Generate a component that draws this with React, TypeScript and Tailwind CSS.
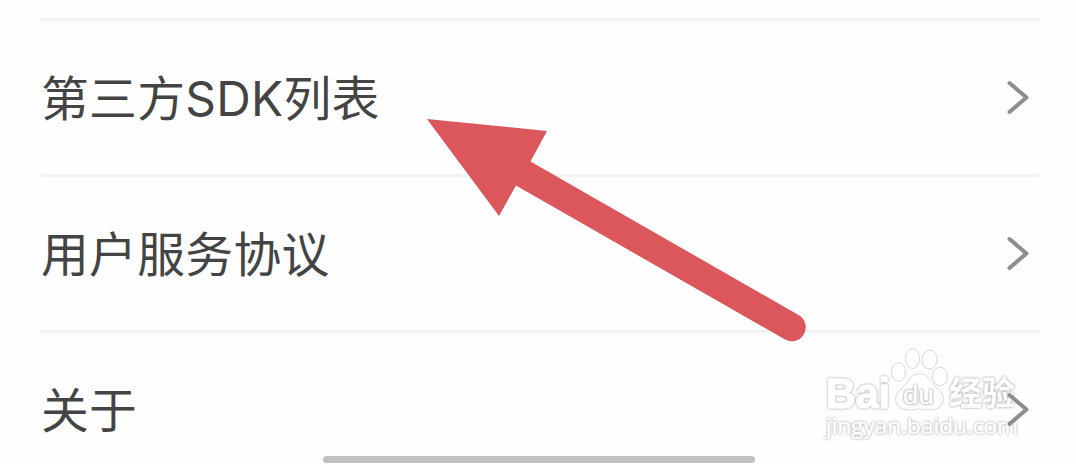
const items = ['第三方SDK列表', '用户服务协议', '关于'];

function Chevron() {
  return (
    <svg className="w-6 h-9 shrink-0" viewBox="0 0 24 36" fill="none">
      <path
        d="M2.5 3L19.5 17.5L2.5 32"
        stroke="#8e8e8e"
        strokeWidth={4}
        strokeLinecap="round"
        strokeLinejoin="round"
      />
    </svg>
  );
}

function Arrow() {
  return (
    <svg className="absolute left-0 top-0" width="1076" height="464" viewBox="0 0 1076 464">
      <path
        d="M427 119L547 131L530.5 161.5L798.5 315A13.5 13.5 0 0 1 785 339.5L516 185.5L499 216Z"
        fill="#db575b"
      />
    </svg>
  );
}

function Watermark() {
  return (
    <svg
      className="absolute left-[810px] top-[335px]"
      width="240"
      height="120"
      viewBox="0 0 240 120"
      fill="#fff"
      stroke="#d8d8d8"
      strokeWidth={1}
    >
      <text
        x="16"
        y="73"
        textLength="64"
        lengthAdjust="spacingAndGlyphs"
        className="font-['Liberation_Sans'] font-bold text-[42px] [filter:drop-shadow(0_0_0.9px_#999)]"
        stroke="#fff"
        strokeWidth={1.6}
        strokeLinejoin="round"
      >
        Bai
      </text>
      {/* Paw */}
      <ellipse cx="88.5" cy="37" rx="7" ry="9.3" />
      <ellipse cx="102.5" cy="23.5" rx="7" ry="10" />
      <ellipse cx="119.5" cy="24.5" rx="7.5" ry="9.5" />
      <ellipse cx="130" cy="41.5" rx="7.5" ry="9.3" />
      <path d="M109 39C117 38 120 45 125 51C130 57 135 59 133 67C131 75 122 76 109 74C97 76 88 75 86 67C84 58 91 55 96 49C100 43 102 39 109 39Z" />
      <text
        x="93"
        y="68.5"
        textLength="31"
        lengthAdjust="spacingAndGlyphs"
        className="font-['Liberation_Sans'] text-[25px] [filter:drop-shadow(0_0_0.8px_#777)]"
        stroke="#fff"
        strokeWidth={0.5}
      >
        du
      </text>
      <text
        x="139"
        y="70"
        textLength="66"
        className="font-['Noto_Sans_CJK_SC',sans-serif] font-bold text-[33px] [filter:drop-shadow(0_0_0.9px_#888)]"
        stroke="#fff"
        strokeWidth={0.3}
      >
        经验
      </text>
      <text
        x="16"
        y="99"
        textLength="192"
        lengthAdjust="spacingAndGlyphs"
        className="font-['Open_Sans'] text-[22px] [filter:drop-shadow(0_0_0.9px_#999)]"
        stroke="#fff"
        strokeWidth={0.6}
      >
        jingyan.baidu.com
      </text>
    </svg>
  );
}

export default function App() {
  return (
    <main className="relative w-[1076px] h-[464px] overflow-hidden bg-[#fefefe] pt-[18px]">
      <Watermark />
      <ul className="relative ml-[41px] mr-[37px]">
        {items.map((item) => (
          <li
            key={item}
            className="flex h-[156px] items-center justify-between border-t-[3px] border-[#f3f3f3] pr-2"
          >
            <span className="pt-1 text-[47.8px] leading-none tracking-[0.3px] text-[#444] whitespace-nowrap font-['Inter','Noto_Sans_CJK_SC',sans-serif]">
              {item}
            </span>
            <Chevron />
          </li>
        ))}
      </ul>
      <Arrow />
      {/* Home indicator */}
      <div className="absolute left-[323px] top-[456px] h-[7px] w-[432px] rounded-full bg-[#c1c1c1]" />
    </main>
  );
}
